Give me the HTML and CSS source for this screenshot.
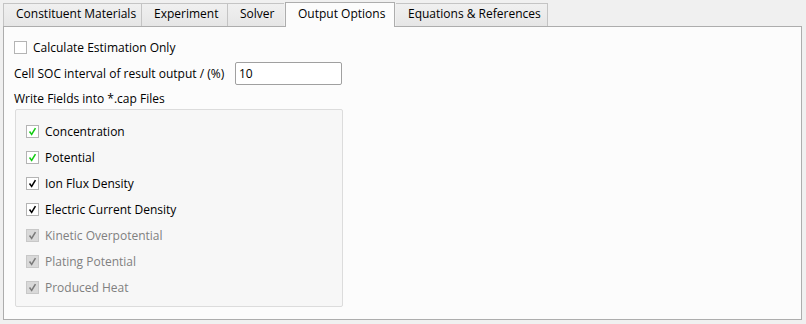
FILE: index.html
```html
<!DOCTYPE html>
<html lang="en">
<head>
    <meta charset="UTF-8">
    <title>Output Options</title>
    <link rel="stylesheet" href="styles.css">
</head>
<body>
    <div class="tabs">
        <div class="tab tab-materials">Constituent Materials</div>
        <div class="tab tab-experiment">Experiment</div>
        <div class="tab tab-solver">Solver</div>
        <div class="tab tab-output active">Output Options</div>
        <div class="tab tab-equations">Equations &amp; References</div>
    </div>
    <div class="panel">
        <label class="check top-check">
            <span class="box"></span>
            <span>Calculate Estimation Only</span>
        </label>
        <div class="field-row">
            <span class="field-label">Cell SOC interval of result output / (%)</span>
            <div class="input">10</div>
        </div>
        <div class="section-title">Write Fields into *.cap Files</div>
        <div class="group">
            <label class="check"><span class="box green"><svg viewBox="0 0 13 13"><path d="M3 6.5 L5.5 10 L10 2.5"/></svg></span><span>Concentration</span></label>
            <label class="check"><span class="box green"><svg viewBox="0 0 13 13"><path d="M3 6.5 L5.5 10 L10 2.5"/></svg></span><span>Potential</span></label>
            <label class="check"><span class="box black"><svg viewBox="0 0 13 13"><path d="M3 6.5 L5.5 10 L10 2.5"/></svg></span><span>Ion Flux Density</span></label>
            <label class="check"><span class="box black"><svg viewBox="0 0 13 13"><path d="M3 6.5 L5.5 10 L10 2.5"/></svg></span><span>Electric Current Density</span></label>
            <label class="check disabled"><span class="box grey"><svg viewBox="0 0 13 13"><path d="M3 6.5 L5.5 10 L10 2.5"/></svg></span><span>Kinetic Overpotential</span></label>
            <label class="check disabled"><span class="box grey"><svg viewBox="0 0 13 13"><path d="M3 6.5 L5.5 10 L10 2.5"/></svg></span><span>Plating Potential</span></label>
            <label class="check disabled"><span class="box grey"><svg viewBox="0 0 13 13"><path d="M3 6.5 L5.5 10 L10 2.5"/></svg></span><span>Produced Heat</span></label>
        </div>
    </div>
</body>
</html>
```

FILE: styles.css
```css
body {
    margin: 0;
    background: #f0f0f0;
    font-family: "Open Sans", "Noto Sans", sans-serif;
    font-size: 12px;
    color: #000;
    width: 806px;
    height: 324px;
    overflow: hidden;
}
.tabs {
    display: flex;
    align-items: flex-end;
    height: 26px;
    padding-left: 3px;
}
.tab {
    box-sizing: border-box;
    height: 23px;
    padding: 0 0 0 12px;
    line-height: 20px;
    border: 1px solid #c4c4c4;
    border-bottom: none;
    border-right: none;
    background: linear-gradient(#f0f0f0, #e6e6e6);
    color: #000;
    white-space: nowrap;
}
.tab-materials { width: 138px; }
.tab-experiment { width: 86px; }
.tab-solver { width: 57px; }
.tab-output { width: 110px; }
.tab-equations { width: 153px; }
.tab:last-child {
    border-right: 1px solid #c4c4c4;
}
.tab.active {
    height: 25px;
    background: #fcfcfc;
    border: 1px solid #adadad;
    border-bottom: none;
    margin-bottom: -1px;
    line-height: 21px;
    position: relative;
    z-index: 1;
    margin-left: 1px;
}
.tab.active + .tab {
    border-left: none;
    margin-left: 1px;
    width: 152px;
}
.panel {
    box-sizing: border-box;
    margin-left: 3px;
    width: 799px;
    height: 294px;
    background: #fcfcfc;
    border: 1px solid #adadad;
    padding: 7px 10px 0 10px;
}
.check {
    display: flex;
    align-items: center;
    gap: 6px;
    height: 26px;
}
.box {
    box-sizing: border-box;
    width: 13px;
    height: 13px;
    border: 1px solid #b4b4b4;
    background: #fff;
    display: flex;
    align-items: center;
    justify-content: center;
    flex: none;
}
.box svg {
    width: 13px;
    height: 13px;
    fill: none;
    stroke-width: 1.8;
}
.box.green svg { stroke: #12cc12; }
.box.black svg { stroke: #000; }
.box.grey { background: #d9d9d9; border-color: #c8c8c8; }
.box.grey svg { stroke: #7a7a7a; }
.field-row {
    display: flex;
    align-items: center;
    height: 24px;
    margin-top: 1px;
}
.field-label {
    width: 221px;
}
.input {
    box-sizing: border-box;
    width: 107px;
    height: 23px;
    border: 1px solid #a0a0a0;
    border-radius: 2px;
    background: #fff;
    padding-left: 3px;
    line-height: 21px;
}
.section-title {
    height: 24px;
    line-height: 28px;
}
.group {
    box-sizing: border-box;
    width: 328px;
    height: 198px;
    margin-left: 1px;
    background: #f7f7f7;
    border: 1px solid #dcdcdc;
    border-radius: 2px;
    padding: 8px 0 0 10px;
}
.check.disabled {
    color: #808080;
}
```
